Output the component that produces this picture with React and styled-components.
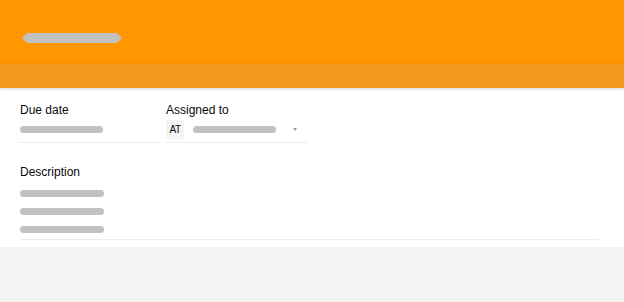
import React from "react";
import styled, { createGlobalStyle } from "styled-components";

const Global = createGlobalStyle`
  html, body { margin: 0; padding: 0; background: #f3f3f3; }
  body { font-family: "Liberation Sans", Arial, sans-serif; }
`;

const Page = styled.div`
  width: 624px;
  min-height: 302px;
  background: #f3f3f3;
`;

const Header = styled.header`
  height: 64px;
  background: #ff9800;
  box-sizing: border-box;
  padding: 33px 0 0 22px;
`;

const TitleSkeleton = styled.div`
  width: 100px;
  height: 10px;
  background: #c2c2c2;
  clip-path: polygon(5px 0, calc(100% - 5px) 0, 100% 50%, calc(100% - 5px) 100%, 5px 100%, 0 50%);
`;

const SubBand = styled.div`
  height: 24px;
  background: #f4991c;
  position: relative;
  z-index: 1;
  box-shadow: 0 1px 3px rgba(0, 0, 0, 0.18);
`;

const Panel = styled.section`
  background: #fff;
  padding: 15px 25px 7px 18px;
`;

const FieldRow = styled.div`
  display: flex;
  gap: 4px;
`;

const Field = styled.div`
  width: 143px;
  box-sizing: border-box;
`;

const Label = styled.div`
  font-size: 12px;
  line-height: 14px;
  color: #0a0a0a;
  padding-left: ${(p) => p.$indent ?? 2}px;
`;

const ValueRow = styled.div`
  display: flex;
  align-items: center;
  height: 19px;
  margin-top: 3px;
  padding: 0 11px 3px ${(p) => p.$indent ?? 2}px;
  border-bottom: 1px solid #ececec;
`;

const Skeleton = styled.div`
  width: ${(p) => p.$w}px;
  height: ${(p) => p.$h || 7}px;
  border-radius: 4px;
  background: #c2c2c2;
  margin-left: ${(p) => p.$ml || 0}px;
`;

const Badge = styled.div`
  width: 18px;
  height: 19px;
  background: #f4f4f4;
  font-size: 10px;
  letter-spacing: -0.4px;
  color: #0a0a0a;
  display: flex;
  align-items: center;
  justify-content: center;
`;

const Caret = styled.div`
  margin-left: auto;
  width: 0;
  height: 0;
  border-left: 2.5px solid transparent;
  border-right: 2.5px solid transparent;
  border-top: 3px solid #9a9a9a;
`;

const Description = styled.div`
  margin-top: 22px;
  padding-left: 2px;
`;

const Lines = styled.div`
  display: flex;
  flex-direction: column;
  gap: 11px;
  margin-top: 11px;
  padding-bottom: 6px;
  border-bottom: 1px solid #ececec;
`;

export default function App() {
  return (
    <Page>
      <Global />
      <Header>
        <TitleSkeleton />
      </Header>
      <SubBand />
      <Panel>
        <FieldRow>
          <Field>
            <Label>Due date</Label>
            <ValueRow>
              <Skeleton $w={83} />
            </ValueRow>
          </Field>
          <Field>
            <Label $indent={1}>Assigned to</Label>
            <ValueRow $indent={1}>
              <Badge>AT</Badge>
              <Skeleton $w={83} $ml={9} />
              <Caret />
            </ValueRow>
          </Field>
        </FieldRow>
        <Description>
          <Label $indent={0}>Description</Label>
          <Lines>
            <Skeleton $w={84} />
            <Skeleton $w={84} />
            <Skeleton $w={84} />
          </Lines>
        </Description>
      </Panel>
    </Page>
  );
}
